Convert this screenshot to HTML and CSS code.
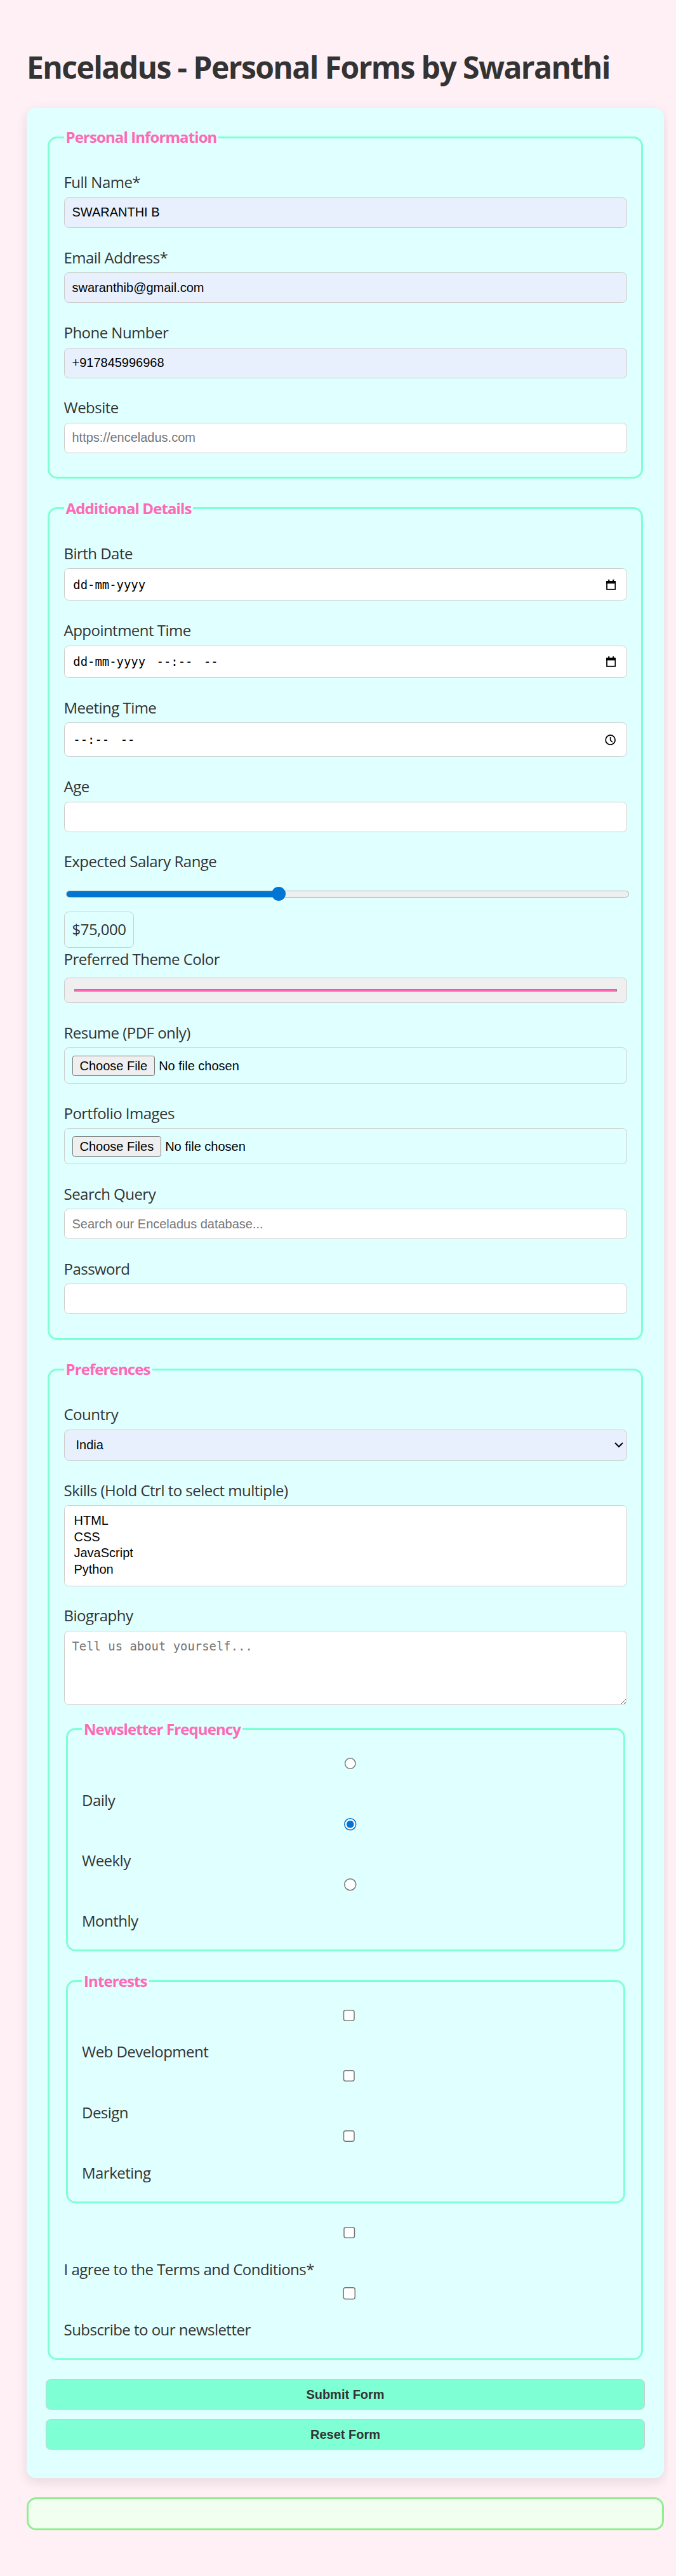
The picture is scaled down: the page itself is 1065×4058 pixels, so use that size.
FILE: index.html
```html
<!DOCTYPE html>
<html lang="en">
<head>
<meta charset="utf-8">
<title>Enceladus - Personal Forms by Swaranthi</title>
<link rel="stylesheet" href="styles.css">
</head>
<body>
<h1 class="title">Enceladus - Personal Forms by Swaranthi</h1>
<form class="card">
  <fieldset class="fs">
    <legend class="lg">Personal Information</legend>
    <div class="field"><label class="lbl" for="fullname">Full Name*</label><input class="ctl ctl-fill" type="text" id="fullname" value="SWARANTHI B"></div>
    <div class="field"><label class="lbl" for="email">Email Address*</label><input class="ctl ctl-fill" type="email" id="email" value="swaranthib@gmail.com"></div>
    <div class="field"><label class="lbl" for="phone">Phone Number</label><input class="ctl ctl-fill" type="tel" id="phone" value="+917845996968"></div>
    <div class="field"><label class="lbl" for="website">Website</label><input class="ctl" type="url" id="website" placeholder="https://enceladus.com"></div>
  </fieldset>

  <fieldset class="fs">
    <legend class="lg">Additional Details</legend>
    <div class="field"><label class="lbl">Birth Date</label>
      <div class="ctl ctl-dt"><span class="dt">dd-mm-yyyy</span><svg class="ico ico-cal" viewBox="0 0 10 11" aria-hidden="true"><rect x="2" y="0" width="1.4" height="2"/><rect x="6.6" y="0" width="1.4" height="2"/><rect x="0" y="1.4" width="10" height="2.8"/><rect x="0.6" y="2" width="8.8" height="8.4" fill="none" stroke="#000" stroke-width="1.2"/></svg></div></div>
    <div class="field"><label class="lbl">Appointment Time</label>
      <div class="ctl ctl-dt"><span class="dt">dd-mm-yyyy</span><span class="dt dt-gap">--:--</span><span class="dt dt-gap">--</span><svg class="ico ico-cal" viewBox="0 0 10 11" aria-hidden="true"><rect x="2" y="0" width="1.4" height="2"/><rect x="6.6" y="0" width="1.4" height="2"/><rect x="0" y="1.4" width="10" height="2.8"/><rect x="0.6" y="2" width="8.8" height="8.4" fill="none" stroke="#000" stroke-width="1.2"/></svg></div></div>
    <div class="field"><label class="lbl">Meeting Time</label>
      <div class="ctl ctl-dt ctl-time"><span class="dt">--:--</span><span class="dt dt-gap">--</span><svg class="ico ico-clock" viewBox="0 0 12 12" aria-hidden="true"><circle cx="6" cy="6" r="5.2" fill="none" stroke="#000" stroke-width="1.2"/><path d="M6 2.8V6.2L8.3 8.5" fill="none" stroke="#000" stroke-width="1.1"/></svg></div></div>
    <div class="field"><label class="lbl" for="age">Age</label><input class="ctl" type="number" id="age"></div>
    <div class="field field-range"><label class="lbl" for="salary">Expected Salary Range</label><input class="range" type="range" id="salary" min="30000" max="150000" step="1000" value="75000" style="--fill: 38%"><output class="out" for="salary">$75,000</output></div>
    <div class="field"><label class="lbl lbl-wide" for="theme">Preferred Theme Color</label><input class="ctl ctl-color" type="color" id="theme" value="#ff69b4"></div>
    <div class="field"><label class="lbl" for="resume">Resume (PDF only)</label><input class="ctl ctl-file" type="file" id="resume" accept=".pdf"></div>
    <div class="field"><label class="lbl" for="portfolio">Portfolio Images</label><input class="ctl ctl-file" type="file" id="portfolio" multiple></div>
    <div class="field"><label class="lbl" for="search">Search Query</label><input class="ctl" type="search" id="search" placeholder="Search our Enceladus database..."></div>
    <div class="field"><label class="lbl" for="password">Password</label><input class="ctl" type="password" id="password"></div>
  </fieldset>

  <fieldset class="fs fs-pref">
    <legend class="lg">Preferences</legend>
    <div class="field"><label class="lbl" for="country">Country</label>
      <select class="ctl ctl-fill ctl-select" id="country"><option>India</option><option>United States</option><option>United Kingdom</option></select></div>
    <div class="field"><label class="lbl" for="skills">Skills (Hold Ctrl to select multiple)</label>
      <select class="ctl ctl-list" id="skills" multiple><option>HTML</option><option>CSS</option><option>JavaScript</option><option>Python</option></select></div>
    <div class="field field-bio"><label class="lbl" for="bio">Biography</label><textarea class="ctl ctl-area" id="bio" placeholder="Tell us about yourself..."></textarea></div>

    <fieldset class="fs fs-sub">
      <legend class="lg">Newsletter Frequency</legend>
      <div class="opt"><input class="opt-input" type="radio" name="freq" id="daily"><label class="lbl opt-lbl" for="daily">Daily</label></div>
      <div class="opt"><input class="opt-input" type="radio" name="freq" id="weekly" checked><label class="lbl opt-lbl" for="weekly">Weekly</label></div>
      <div class="opt"><input class="opt-input" type="radio" name="freq" id="monthly"><label class="lbl opt-lbl" for="monthly">Monthly</label></div>
    </fieldset>

    <fieldset class="fs fs-sub fs-gap">
      <legend class="lg">Interests</legend>
      <div class="opt"><input class="opt-input opt-cb" type="checkbox" id="webdev"><label class="lbl opt-lbl" for="webdev">Web Development</label></div>
      <div class="opt"><input class="opt-input opt-cb" type="checkbox" id="design"><label class="lbl opt-lbl" for="design">Design</label></div>
      <div class="opt"><input class="opt-input opt-cb" type="checkbox" id="marketing"><label class="lbl opt-lbl" for="marketing">Marketing</label></div>
    </fieldset>

    <div class="opt"><input class="opt-input opt-cb" type="checkbox" id="terms"><label class="lbl opt-lbl" for="terms">I agree to the Terms and Conditions*</label></div>
    <div class="opt"><input class="opt-input opt-cb" type="checkbox" id="subscribe"><label class="lbl opt-lbl" for="subscribe">Subscribe to our newsletter</label></div>
  </fieldset>

  <button class="btn" type="button">Submit Form</button>
  <button class="btn" type="reset">Reset Form</button>
</form>
<div class="result"></div>
</body>
</html>
```

FILE: styles.css
```css
html {
  zoom: 1.5;
}

body {
  margin: 8px;
  padding: 20px 4.67px 20px 20px;
  background: #fff0f5;
  color: #333;
  font-family: "Segoe UI", "Open Sans", "Noto Sans", sans-serif;
}

.title {
  margin: 21.44px 0;
  font-size: 32px;
  line-height: 42.67px;
  font-weight: 700;
  letter-spacing: -1.05px;
  color: #333;
}

.card {
  display: block;
  padding: 20px;
  background: #e0ffff;
  border-radius: 10px;
  box-shadow: 0 4px 12px rgba(0, 0, 0, 0.1);
}

.fs {
  margin: 0 2px 20.5px;
  padding: 26px 15px 15px;
  border: 2px solid #7fffd4;
  border-radius: 10px;
  min-inline-size: 0;
}

.fs-sub {
  padding-top: 19.3px;
  padding-bottom: 10.95px;
}

.fs-pref {
  padding-bottom: 10.95px;
}

.fs-gap {
  margin-bottom: 24.8px;
}

.lg {
  padding: 0 2px;
  font-size: 16px;
  line-height: 21.33px;
  font-weight: 700;
  letter-spacing: -0.6px;
  color: #ff69b4;
}

.field {
  margin-bottom: 20.6px;
}

.field:last-child {
  margin-bottom: 9.8px;
}

.field-bio {
  margin-bottom: 14.8px;
}

.field-range {
  margin-bottom: 1.7px;
}

.lbl {
  display: block;
  margin-bottom: 5px;
  font-size: 16px;
  line-height: 21.33px;
  letter-spacing: -0.35px;
  color: #333;
}

.lbl-wide {
  margin-bottom: 8.3px;
}

.ctl {
  display: block;
  box-sizing: border-box;
  width: 100%;
  height: 32px;
  margin: 0;
  padding: 0 8px;
  border: 1px solid #ccc;
  border-radius: 5px;
  background: #fff;
  color: #000;
  font-family: "Liberation Sans", Arial, sans-serif;
  font-size: 13.333px;
}

.ctl::placeholder {
  color: #757575;
}

.ctl-fill {
  background: #e8f0fe;
}

.ctl-select {
  height: 32.67px;
}

.ctl-list {
  height: 84.9px;
  padding: 8px;
}

.ctl-area {
  height: 77.8px;
  padding: 8px;
  font-family: "DejaVu Sans Mono", monospace;
  font-size: 12.6px;
  resize: vertical;
}

.ctl-color {
  height: 26.67px;
  padding: 8px;
  background: #efefef;
}

.ctl-color::-webkit-color-swatch-wrapper {
  padding: 3.2px 2px;
}

.ctl-color::-webkit-color-swatch {
  border: 1px solid #888;
}

.ctl-file {
  height: 37.67px;
  padding: 8px;
  background: transparent;
}

.ctl-dt {
  display: flex;
  align-items: center;
  height: 34px;
  padding: 0 11px 0 9.2px;
  font-family: "DejaVu Sans Mono", monospace;
  font-size: 12.6px;
}

.ctl-time {
  height: 36px;
}

.dt-gap {
  margin-left: 11.7px;
}

.ico {
  margin-left: auto;
  fill: #000;
}

.ico-cal {
  width: 10.3px;
  height: 11.1px;
}

.ico-clock {
  width: 11.5px;
  height: 11.5px;
}

.range {
  display: block;
  width: 100%;
  height: 36.8px;
  margin: 0 0 0 2px;
  padding: 0;
  -webkit-appearance: none;
  appearance: none;
  background: transparent;
}

.range::-webkit-slider-runnable-track {
  box-sizing: border-box;
  height: 7.33px;
  border: 1px solid #b2b2b2;
  border-radius: 4px;
  background: linear-gradient(to right, #0075d4 0, #0075d4 var(--fill), #efefef var(--fill), #efefef 100%);
}

.range::-webkit-slider-thumb {
  -webkit-appearance: none;
  appearance: none;
  width: 15px;
  height: 15px;
  margin-top: -4.83px;
  border: none;
  border-radius: 50%;
  background: #0075d4;
}

.out {
  display: block;
  width: fit-content;
  box-sizing: border-box;
  height: 37.8px;
  padding: 0 8px;
  border: 1px solid #ccc;
  border-radius: 5px;
  font-size: 16px;
  line-height: 35.8px;
  letter-spacing: -0.35px;
  color: #333;
}

.opt-input {
  display: block;
  box-sizing: border-box;
  width: 100%;
  height: 13px;
  margin: 0 0 20.9px 5px;
  padding: 0;
  accent-color: #0075d4;
}

.opt-cb {
  margin-left: 4px;
}

.opt-lbl {
  margin-bottom: 8.25px;
}

.btn {
  display: block;
  box-sizing: border-box;
  width: 100%;
  height: 32px;
  margin: 0 0 10px;
  border: 1px solid #ccc;
  border-radius: 5px;
  background: #7fffd4;
  color: #333;
  font-family: "Liberation Sans", Arial, sans-serif;
  font-size: 13.333px;
  font-weight: 700;
}

.result {
  box-sizing: border-box;
  height: 34.67px;
  margin-top: 20px;
  border: 2px solid #90ee90;
  border-radius: 10px;
  background: #f0fff0;
}
```
